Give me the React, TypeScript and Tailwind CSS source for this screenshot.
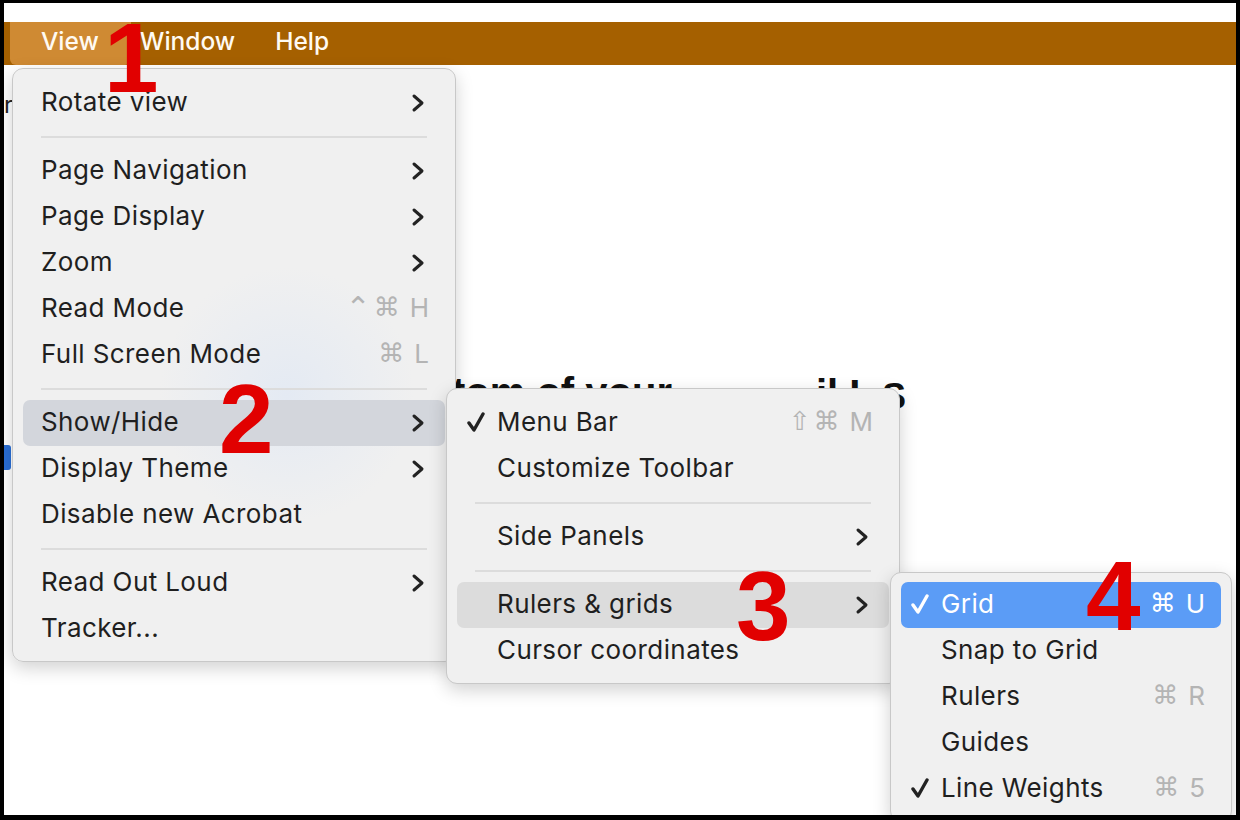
import React from 'react';

type Row = {
    label?: string;
    sep?: boolean;
    sub?: boolean;
    keys?: string[];
    check?: boolean;
    active?: 'gray' | 'blue';
};

const font = { fontFamily: 'Inter, "Noto Sans", "DejaVu Sans", sans-serif' };
const symFont = { fontFamily: '"DejaVu Sans", Inter, sans-serif' };
const boldDoc = { fontFamily: '"Liberation Sans", Arial, sans-serif' };

const mainRows: Row[] = [
    { label: 'Rotate view', sub: true },
    { sep: true },
    { label: 'Page Navigation', sub: true },
    { label: 'Page Display', sub: true },
    { label: 'Zoom', sub: true },
    { label: 'Read Mode', keys: ['⌃', '⌘', 'H'] },
    { label: 'Full Screen Mode', keys: ['⌘', 'L'] },
    { sep: true },
    { label: 'Show/Hide', sub: true, active: 'gray' },
    { label: 'Display Theme', sub: true },
    { label: 'Disable new Acrobat' },
    { sep: true },
    { label: 'Read Out Loud', sub: true },
    { label: 'Tracker...' },
];

const showHideRows: Row[] = [
    { label: 'Menu Bar', check: true, keys: ['⇧', '⌘', 'M'] },
    { label: 'Customize Toolbar' },
    { sep: true },
    { label: 'Side Panels', sub: true },
    { sep: true },
    { label: 'Rulers & grids', sub: true, active: 'gray' },
    { label: 'Cursor coordinates' },
];

const gridRows: Row[] = [
    { label: 'Grid', check: true, keys: ['⌘', 'U'], active: 'blue' },
    { label: 'Snap to Grid' },
    { label: 'Rulers', keys: ['⌘', 'R'] },
    { label: 'Guides' },
    { label: 'Line Weights', check: true, keys: ['⌘', '5'] },
];

function Chevron() {
    return (
        <svg width="14" height="20" viewBox="0 0 14 20" className="mr-[4px]">
            <path d="M3 3 L11 10 L3 17" fill="none" stroke="#222" strokeWidth="3" strokeLinecap="round" strokeLinejoin="round" />
        </svg>
    );
}

function Check({ color }: { color: string }) {
    return (
        <svg width="18" height="22" viewBox="0 0 18 22" className="mb-[2px]">
            <path d="M2 12 L7 19 L16 3" fill="none" stroke={color} strokeWidth="3.4" strokeLinecap="round" strokeLinejoin="round" />
        </svg>
    );
}

function MenuRows({ rows, checkCol }: { rows: Row[]; checkCol: boolean }) {
    return (
        <>
            {rows.map((r, i) => {
                if (r.sep) {
                    return (
                        <div key={i} className="flex h-[22px] items-center">
                            <div className="mx-[18px] h-[2px] w-full bg-[#dcdcdc]" />
                        </div>
                    );
                }
                const blue = r.active === 'blue';
                const bg = blue
                    ? 'bg-[#5b9cf6]'
                    : r.active === 'gray'
                      ? checkCol
                          ? 'bg-[#dcdcdc]'
                          : 'bg-[#d3d6dc]'
                      : '';
                return (
                    <div
                        key={i}
                        className={`flex h-[46px] items-center rounded-[7px] pr-[16px] ${checkCol ? 'pl-[10px]' : 'pl-[18px]'} ${bg}`}
                    >
                        {checkCol && (
                            <div className="flex w-[30px] items-center">
                                {r.check && <Check color={blue ? '#ffffff' : '#222222'} />}
                            </div>
                        )}
                        <span className={`flex-1 pb-[3px] text-[26px] tracking-[0.4px] ${blue ? 'text-white' : 'text-[#1f1f1f]'}`}>
                            {r.label}
                        </span>
                        {r.keys && (
                            <span className={`flex items-center gap-[3px] pb-[3px] text-[26px] ${blue ? 'text-white' : 'text-[#b4b4b4]'}`}>
                                {r.keys.map((k, j) => {
                                    const last = j === r.keys!.length - 1;
                                    return (
                                        <span
                                            key={j}
                                            style={last ? font : symFont}
                                            className={last ? 'ml-[7px]' : k === '⌃' ? 'text-[30px]' : ''}
                                        >
                                            {k}
                                        </span>
                                    );
                                })}
                            </span>
                        )}
                        {r.sub && <Chevron />}
                    </div>
                );
            })}
        </>
    );
}

export default function App() {
    return (
        <div
            className="relative h-[820px] w-[1240px] overflow-hidden bg-black pb-[5px] pl-[4px] pr-[4px] pt-[3px]"
            style={font}
        >
            <div className="flex h-full flex-col bg-white">
                <div className="h-[19px]" />
                {/* menu bar */}
                <div className="flex h-[43px] items-center bg-[#a56000] text-[24.5px] font-medium text-[#fffaf2]">
                    <div className="ml-[6px] flex h-full items-center rounded-b-[6px] bg-[#cf8a33] pb-[4px] pl-[31px] pr-[32px]">
                        View
                    </div>
                    <div className="ml-[9px] pb-[4px]">Window</div>
                    <div className="ml-[40px] pb-[4px]">Help</div>
                </div>
                {/* page behind */}
                <div className="relative flex-1">
                    <div className="pt-[22px] text-[24px] text-[#222]">re</div>
                </div>
            </div>

            {/* document fragments */}
            <div className="absolute left-[4px] top-[445px] h-[25px] w-[7px] rounded-r-[3px] bg-[#2a6fd6]" />
            <div className="absolute left-[452px] top-[362px] text-[40px] font-bold text-[#111]" style={boldDoc}>
                tom of your
            </div>
            <div className="absolute left-[816px] top-[364px] text-[40px] font-bold text-[#111]" style={boldDoc}>
                il I
            </div>
            <div className="absolute left-[882px] top-[370px] text-[36px] font-bold text-[#111]" style={boldDoc}>
                S
            </div>

            {/* main menu */}
            <div className="absolute left-[12px] top-[68px] w-[444px] rounded-[11px] border border-[#c8c8c8] bg-[radial-gradient(circle_at_62%_55%,#e4eaf3_0%,#f0f0f0_30%)] px-[10px] pb-[9px] pt-[11px] shadow-[0_6px_18px_rgba(0,0,0,0.18)]">
                <MenuRows rows={mainRows} checkCol={false} />
            </div>

            {/* show/hide submenu */}
            <div className="absolute left-[446px] top-[388px] w-[454px] rounded-[11px] border border-[#c8c8c8] bg-[#f0f0f0] px-[10px] pb-[9px] pt-[11px] shadow-[0_6px_18px_rgba(0,0,0,0.18)]">
                <MenuRows rows={showHideRows} checkCol={true} />
            </div>

            {/* rulers & grids submenu */}
            <div className="absolute left-[890px] top-[572px] w-[342px] rounded-[11px] border border-[#c8c8c8] bg-[#f0f0f0] px-[10px] pb-[9px] pt-[9px] shadow-[0_6px_18px_rgba(0,0,0,0.18)]">
                <MenuRows rows={gridRows} checkCol={true} />
            </div>

            {/* frame edges over the submenu */}
            <div className="absolute bottom-0 left-0 h-[5px] w-full bg-black" />
            <div className="absolute right-0 top-0 h-full w-[4px] bg-black" />

            {/* annotations */}
            {[
                { n: '1', cls: 'left-[104px] top-[9px]' },
                { n: '2', cls: 'left-[219px] top-[370px]' },
                { n: '3', cls: 'left-[736px] top-[557px]' },
                { n: '4', cls: 'left-[1086px] top-[547px]' },
            ].map((a) => (
                <div
                    key={a.n}
                    className={`absolute ${a.cls} text-[98px] font-bold leading-none text-[#e10000]`}
                    style={boldDoc}
                >
                    {a.n}
                </div>
            ))}
        </div>
    );
}
